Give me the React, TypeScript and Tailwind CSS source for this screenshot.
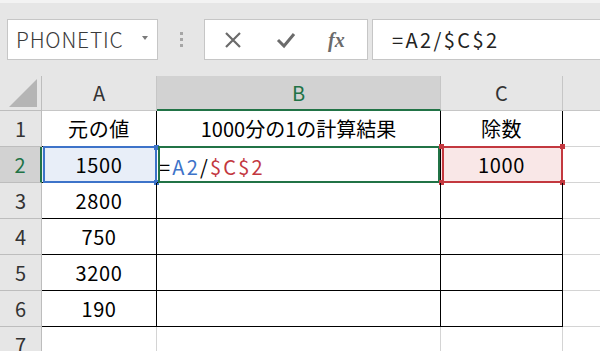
import React from 'react';

const font = '"Noto Sans CJK JP", "Noto Sans", sans-serif';

const colWidths = 'grid-cols-[42px_115px_284px_122px_1fr]';

const values: [string, string, string][] = [
  ['元の値', '1000分の1の計算結果', '除数'],
  ['1500', '', '1000'],
  ['2800', '', ''],
  ['750', '', ''],
  ['3200', '', ''],
  ['190', '', ''],
  ['', '', ''],
];

const Handle = ({ className }: { className: string }) => (
  <div className={`absolute w-[5px] h-[5px] ${className}`} />
);

const Toolbar = () => (
  <div className="h-[76px] bg-[#e6e6e6] border-t-[3px] border-[#f3f3f3] flex items-start pt-[16px] pl-[7px]">
    {/* name box */}
    <div className="w-[151px] h-[41px] bg-white border border-[#c6c6c6] flex items-center pl-[8px] pr-[9px] justify-between">
      <span className="text-[21px] text-[#3a3a3a] tracking-[0.8px] font-light">PHONETIC</span>
      <span className="w-0 h-0 border-l-[3px] border-r-[3px] border-t-[4px] border-l-transparent border-r-transparent border-t-[#7a7a7a] mb-[4px]" />
    </div>
    <div className="w-[46px] h-[41px] flex flex-col items-center justify-center gap-[3px]">
      <span className="w-[3px] h-[3px] bg-[#a6a6a6]" />
      <span className="w-[3px] h-[3px] bg-[#a6a6a6]" />
      <span className="w-[3px] h-[3px] bg-[#a6a6a6]" />
    </div>
    {/* cancel / enter / fx */}
    <div className="w-[164px] h-[41px] bg-white border border-[#c6c6c6] flex items-center pl-[19px] gap-[34px]">
      <svg width="18" height="18" viewBox="0 0 18 18">
        <path d="M2 2 L16 16 M16 2 L2 16" stroke="#6b6b6b" strokeWidth="2.2" fill="none" />
      </svg>
      <svg width="20" height="18" viewBox="0 0 20 18">
        <path d="M2 9 L8 15 L18 3" stroke="#6b6b6b" strokeWidth="3" fill="none" />
      </svg>
      <span className="text-[20px] text-[#6b6b6b] italic font-bold ml-[-2px]" style={{ fontFamily: '"Liberation Serif", serif' }}>
        fx
      </span>
    </div>
    <div className="ml-[4px] flex-1 h-[41px] bg-white border border-[#c6c6c6] border-r-0 flex items-center pl-[19px]">
      <span className="text-[20px] text-[#222] tracking-[2.4px]">=A2/$C$2</span>
    </div>
  </div>
);

export default function App() {
  return (
    <div className="w-[600px] h-[351px] overflow-hidden bg-white" style={{ fontFamily: font }}>
      <Toolbar />
      {/* column headers */}
      <div className={`grid ${colWidths} h-[35px] bg-[#e6e6e6]`}>
        <div className="border-r border-b border-[#bdbdbd] flex items-end justify-end pr-[4px] pb-[3px]">
          <span className="w-0 h-0 border-l-[30px] border-t-[28px] border-l-transparent border-t-transparent border-b-0 border-r-0 relative">
            <span className="absolute right-0 bottom-0 w-0 h-0 border-l-[28px] border-b-[28px] border-l-transparent border-b-[#b5b5b5]" />
          </span>
        </div>
        <div className="border-r border-b border-[#c6c6c6] flex items-center justify-center text-[20px] text-[#333]">A</div>
        <div className="bg-[#d2d2d2] border-r border-[#c6c6c6] border-b-2 border-b-[#217346] flex items-center justify-center text-[20px] text-[#217346]">B</div>
        <div className="border-r border-b border-[#c6c6c6] flex items-center justify-center text-[20px] text-[#333]">C</div>
        <div className="border-b border-[#c6c6c6]" />
      </div>
      {/* rows */}
      {values.map((row, i) => {
        const n = i + 1;
        const sel = n === 2;
        const inTable = n <= 6;
        const line = inTable ? 'border-black' : 'border-[#d4d4d4]';
        return (
          <div key={n} className={`grid ${colWidths} h-[36px]`}>
            <div
              className={`border-r border-b border-[#bdbdbd] flex items-center justify-center text-[20px] ${
                sel ? 'bg-[#d2d2d2] text-[#217346] border-r-2 border-r-[#217346]' : 'bg-[#e6e6e6] text-[#333]'
              }`}
            >
              {n}
            </div>
            <div
              className={`relative border-r border-b ${line} ${sel ? 'bg-[#e8eef8]' : ''} flex items-center justify-center text-[20px] tracking-[0.6px] text-black`}
            >
              {row[0]}
              {sel && (
                <>
                  <div className="absolute -top-[1px] left-[1px] -right-[1px] -bottom-[1px] border-2 border-[#3d73c9]" />
                  <Handle className="-top-[2px] -right-[3px] bg-[#3d73c9]" />
                  <Handle className="-bottom-[3px] -right-[3px] bg-[#3d73c9]" />
                </>
              )}
            </div>
            <div className={`relative border-r border-b ${line} flex items-center justify-center text-[20px] text-black`}>
              {sel ? (
                <span className="absolute left-[2px] top-[5px] tracking-[2.2px]">
                  =<span className="text-[#3d73c9]">A2</span>/<span className="text-[#c3383f]">$C$2</span>
                </span>
              ) : (
                row[1]
              )}
              {sel && <div className="absolute -top-[1px] left-[1px] right-[0px] -bottom-[1px] border-2 border-[#217346]" />}
            </div>
            <div
              className={`relative border-r border-b ${line} ${sel ? 'bg-[#f9e7e7]' : ''} flex items-center justify-center text-[20px] tracking-[0.6px] text-black`}
            >
              {row[2]}
              {sel && (
                <>
                  <div className="absolute -top-[1px] left-[1px] -right-[1px] -bottom-[1px] border-2 border-[#c3383f]" />
                  <Handle className="-top-[3px] -left-[2px] bg-[#c3383f]" />
                  <Handle className="-top-[3px] -right-[3px] bg-[#c3383f]" />
                  <Handle className="-bottom-[3px] -left-[2px] bg-[#c3383f]" />
                  <Handle className="-bottom-[3px] -right-[3px] bg-[#c3383f]" />
                </>
              )}
            </div>
            <div className="border-b border-[#d4d4d4]" />
          </div>
        );
      })}
    </div>
  );
}
